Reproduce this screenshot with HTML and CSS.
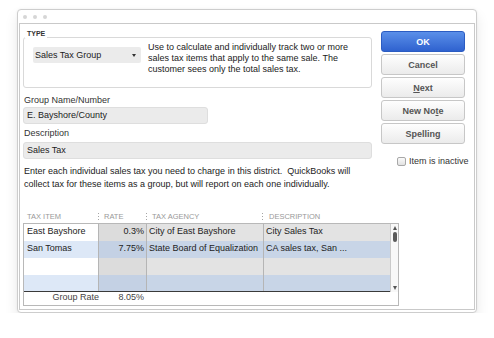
FILE: index.html
```html
<!DOCTYPE html>
<html>
<head>
<meta charset="utf-8">
<link rel="stylesheet" href="styles.css">
</head>
<body>
<div class="window">
  <div class="titlebar"><span class="dot"></span><span class="dot"></span><span class="dot"></span></div>
  <div class="panel">
    <div class="top">
      <div class="left">
        <div class="typebox">
          <div class="typelabel">TYPE</div>
          <div class="typerow">
            <div class="select"><span>Sales Tax Group</span><span class="caret"></span></div>
            <p class="typedesc">Use to calculate and individually track two or more<br>sales tax items that apply to the same sale. The<br>customer sees only the total sales tax.</p>
          </div>
        </div>
        <div class="fieldlabel">Group Name/Number</div>
        <div class="input short">E. Bayshore/County</div>
        <div class="fieldlabel second">Description</div>
        <div class="input wide">Sales Tax</div>
        <p class="note">Enter each individual sales tax you need to charge in this district.&nbsp; QuickBooks will<br>collect tax for these items as a group, but will report on each one individually.</p>
      </div>
      <div class="right">
        <div class="btn primary">OK</div>
        <div class="btn">Cancel</div>
        <div class="btn"><span><u>N</u>ext</span></div>
        <div class="btn"><span>New No<u>t</u>e</span></div>
        <div class="btn">Spelling</div>
        <div class="check"><span class="box"></span><span>Item is inactive</span></div>
      </div>
    </div>
    <div class="thead">
      <div class="th first">TAX ITEM</div>
      <div class="th">RATE</div>
      <div class="th">TAX AGENCY</div>
      <div class="th last">DESCRIPTION</div>
    </div>
    <div class="tbl">
      <div class="tbody">
        <div class="rows">
          <div class="row odd">
            <div class="cell">East Bayshore</div>
            <div class="cell num">0.3%</div>
            <div class="cell">City of East Bayshore</div>
            <div class="cell">City Sales Tax</div>
          </div>
          <div class="row even">
            <div class="cell">San Tomas</div>
            <div class="cell num">7.75%</div>
            <div class="cell">State Board of Equalization</div>
            <div class="cell">CA sales tax, San ...</div>
          </div>
          <div class="row odd">
            <div class="cell"></div>
            <div class="cell num"></div>
            <div class="cell"></div>
            <div class="cell"></div>
          </div>
          <div class="row even">
            <div class="cell"></div>
            <div class="cell num"></div>
            <div class="cell"></div>
            <div class="cell"></div>
          </div>
        </div>
        <div class="scroll">
          <span class="arrow up"></span>
          <span class="thumb"></span>
          <span class="spacer"></span>
          <span class="arrow down"></span>
        </div>
      </div>
      <div class="tfoot">
        <div class="fcell label">Group Rate</div>
        <div class="fcell num">8.05%</div>
        <div class="fcell"></div>
      </div>
    </div>
  </div>
</div>
</body>
</html>
```
FILE: styles.css
```css
* { box-sizing: border-box; }
html, body { margin: 0; background: #fff; }
body {
  padding: 9px 0 0 17px;
  font-family: "Liberation Sans", Arial, sans-serif;
  font-size: 9px;
  color: #222;
}
.window {
  width: 460px;
  height: 304px;
  border: 1px solid #cdcdcd;
  border-radius: 4px;
  background: #fff;
  box-shadow: 0 7px 14px rgba(0, 0, 0, 0.09), 0 0 3px rgba(0, 0, 0, 0.05);
  display: flex;
  flex-direction: column;
}
.titlebar {
  height: 13px;
  display: flex;
  align-items: center;
  gap: 6px;
  padding-left: 5px;
}
.dot { width: 4px; height: 4px; border-radius: 50%; background: #d6d6d6; }
.panel {
  flex: 1;
  margin: 0 1px 2px;
  border: 1px solid #c9c9c9;
  padding-left: 3px;
}
.top { display: flex; }
.left { width: 349px; padding-top: 13px; }
.right {
  width: 84px;
  margin-left: 9px;
  padding-top: 7px;
  display: flex;
  flex-direction: column;
  gap: 2px;
}
.typebox {
  border: 1px solid #d9d9d9;
  border-radius: 3px;
  padding: 0 9px 12px;
}
.typelabel {
  width: max-content;
  margin: -8px 0 0 -8px;
  padding: 0 2px;
  background: #fff;
  font-size: 7px;
  font-weight: bold;
  line-height: 8px;
  color: #333;
}
.typerow { display: flex; align-items: flex-start; margin-top: 4px; }
.select {
  width: 108px;
  height: 16px;
  margin-top: 5px;
  background: #ebebeb;
  border-radius: 2px;
  display: flex;
  align-items: center;
  justify-content: space-between;
  padding: 0 5px 0 2px;
  color: #222;
  flex-shrink: 0;
}
.caret {
  width: 0; height: 0;
  border-left: 2.5px solid transparent;
  border-right: 2.5px solid transparent;
  border-top: 3px solid #333;
}
.typedesc {
  margin: 0 0 0 7px;
  line-height: 11px;
  white-space: nowrap;
  color: #222;
}
.fieldlabel { margin-top: 7px; padding-left: 1px; line-height: 11px; color: #333; }
.fieldlabel.second { margin-top: 4px; }
.input {
  margin-top: 1px;
  height: 17px;
  line-height: 15px;
  background: #ebebeb;
  border: 1px solid #dedede;
  border-radius: 3px;
  padding-left: 3px;
  color: #222;
}
.input.short { width: 185px; }
.input.wide { width: 349px; margin-top: 3px; }
.note {
  margin: 6px 0 0;
  padding-left: 1px;
  line-height: 13px;
  white-space: nowrap;
  color: #222;
}
.btn {
  height: 21px;
  border: 1px solid #c7c7c7;
  border-radius: 3px;
  background: linear-gradient(#fefefe, #ebebeb);
  font-weight: bold;
  color: #555;
  display: flex;
  align-items: center;
  justify-content: center;
}
.btn.primary {
  background: linear-gradient(#5a8fe9, #2f62cf);
  border-color: #2b5cc2;
  color: #fff;
}
.check {
  margin-top: 10px;
  padding-left: 16px;
  display: flex;
  align-items: center;
  gap: 3px;
  line-height: 11px;
  white-space: nowrap;
  color: #333;
}
.box {
  flex: 0 0 9px;
  width: 9px; height: 9px;
  border: 1px solid #a8a8a8;
  border-radius: 2px;
  background: linear-gradient(#fafafa, #e2e2e2);
}
.thead {
  margin-top: 20px;
  width: 376px;
  display: grid;
  grid-template-columns: 75px 48px 116px 1fr;
  height: 11px;
  line-height: 11px;
  font-size: 7.5px;
  color: #999;
}
.th {
  padding-left: 6px;
  white-space: nowrap;
  background: repeating-linear-gradient(#a5a5a5 0 1px, transparent 1px 3px) left center / 1px 8px no-repeat;
}
.th.first { padding-left: 4px; background: none; }
.th.last { padding-left: 7px; }
.tbl {
  margin-top: 1px;
  width: 376px;
  border: 1px solid #b8b8b8;
}
.tbody { display: flex; }
.rows { width: 366px; border-bottom: 1px solid #3a3a3a; }
.row {
  display: grid;
  grid-template-columns: 75px 48px 117px 126px;
  height: 17px;
}
.row:nth-child(4) { height: 16px; }
.cell {
  border-right: 1px solid #b5b5b5;
  line-height: 14px;
  padding: 0 2px;
  white-space: nowrap;
  overflow: hidden;
  color: #222;
}
.cell:first-child { padding-left: 3px; }
.cell:last-child { border-right: none; }
.cell.num { text-align: right; padding-right: 2px; }
.odd .cell { background: #e3e3e3; }
.odd .cell:first-child { background: #fff; }
.odd .cell.num { background: #dcdcdc; }
.even .cell { background: #c8d5e7; }
.even .cell:first-child { background: #dde8f7; }
.even .cell.num { background: #c4d1e4; }
.scroll {
  width: 8px;
  border-left: 1px solid #cacaca;
  background: #f8f8f8;
  display: flex;
  flex-direction: column;
  align-items: center;
  padding: 2px 0 2px;
}
.arrow { width: 0; height: 0; border-left: 2.5px solid transparent; border-right: 2.5px solid transparent; }
.arrow.up { border-bottom: 4px solid #555; }
.arrow.down { border-top: 4px solid #555; }
.thumb { margin-top: 2px; width: 4px; height: 10px; border-radius: 2px; background: #5a5a5a; }
.spacer { flex: 1; }
.tfoot {
  display: grid;
  grid-template-columns: 75px 48px 1fr;
  height: 13px;
  line-height: 11px;
  color: #444;
}
.fcell.label { text-align: right; }
.fcell.num { text-align: right; padding-right: 3px; }
```
